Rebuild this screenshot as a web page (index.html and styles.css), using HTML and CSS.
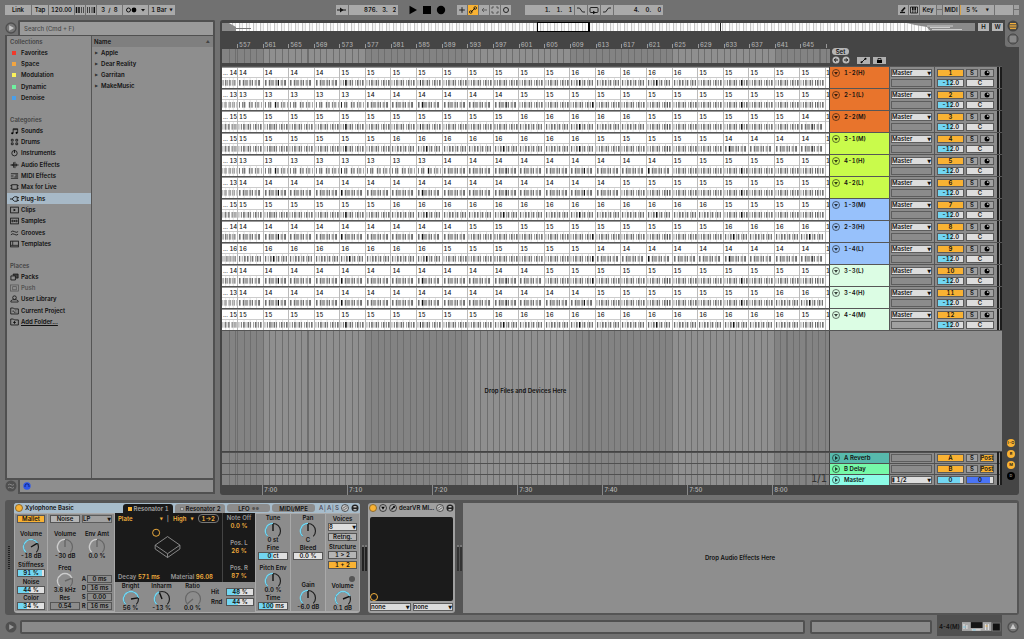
FILE: index.html
```html
<!DOCTYPE html>
<html lang="en">
<head>
<meta charset="utf-8">
<title>Arrangement</title>
<link rel="stylesheet" href="styles.css">
</head>
<body>
<header class="topbar">
  <div class="group">
    <button class="tb w25">Link</button><button class="tb w15">Tap</button><input class="tb w24" aria-label="Tempo" value="120.00">
    <button class="tb w10" aria-label="Nudge down"><svg viewBox="0 0 10 10"><path d="M1.5 2v6M4 2v6" stroke="#111" stroke-width="1.5"/><path d="M6.5 2v6M8.5 2v6" stroke="#333" stroke-width=".8"/></svg></button>
    <button class="tb w10" aria-label="Nudge up"><svg viewBox="0 0 10 10"><path d="M1.5 2v6M3.5 2v6M6 2v6" stroke="#333" stroke-width=".9"/><path d="M8.3 2v6" stroke="#111" stroke-width="1.5"/></svg></button>
    <input class="tb w24" aria-label="Time signature" value="3  /  8">
    <button class="tb w24" aria-label="Metronome"><svg class="wide" viewBox="0 0 24 10"><circle cx="5" cy="5" r="2" fill="none" stroke="#111"/><circle cx="10.500" cy="5" r="2.400" fill="#000"/><path d="M17.500 4h4l-2 2.500z" fill="#111"/></svg></button>
    <button class="tb w26">1 Bar <span class="tri">▼</span></button>
  </div>
  <div class="space-a"></div>
  <div class="group">
    <button class="tb w12" aria-label="Follow"><svg viewBox="0 0 12 10"><path d="M1 5h9" stroke="#111"/><path d="M4 2.500L7.500 5 4 7.500z" fill="#111"/></svg></button><input class="tb w49 pos" aria-label="Position" value="876.   3.   2">
    <div class="transport">
      <button aria-label="Play"><svg viewBox="0 0 10 10"><path d="M1.500 .8L9 5 1.500 9.200z"/></svg></button>
      <button aria-label="Stop"><svg viewBox="0 0 10 10"><path d="M1 1h8v8H1z"/></svg></button>
      <button aria-label="Record"><svg viewBox="0 0 10 10"><circle cx="5" cy="5" r="4.200"/></svg></button>
    </div>
    <button class="tb w10" aria-label="Overdub"><svg viewBox="0 0 10 10"><path d="M5 2.200v5.600M2.200 5h5.600" stroke="#222"/></svg></button>
    <button class="tb w10 on" aria-label="Automation arm"><svg viewBox="0 0 10 10"><path d="M3 7L7 3.200" stroke="#111"/><circle cx="2.800" cy="7" r="1.300" fill="none" stroke="#111" stroke-width=".8"/><circle cx="7.200" cy="3" r="1.300" fill="none" stroke="#111" stroke-width=".8"/></svg></button>
    <button class="tb w10" aria-label="Re-enable automation"><svg viewBox="0 0 10 10"><path d="M3 5h5M5 3L3 5l2 2" fill="none" stroke="#555" stroke-width=".9"/></svg></button>
    <button class="tb w10" aria-label="Capture"><svg viewBox="0 0 10 10"><path d="M2 4V2h2M6 2h2v2M8 6v2H6M4 8H2V6" fill="none" stroke="#444" stroke-width=".8"/></svg></button>
    <button class="tb w10" aria-label="Session record"><svg viewBox="0 0 10 10"><circle cx="5" cy="5" r="2.500" fill="none" stroke="#222"/></svg></button>
    <div class="space-s"></div>
    <input class="tb w49 pos" aria-label="Loop start" value="1.    1.    1">
    <button class="tb w12" aria-label="Punch in"><svg viewBox="0 0 12 10"><path d="M2 3h2.500l3 4H10" fill="none" stroke="#222"/></svg></button>
    <button class="tb w12" aria-label="Loop"><svg viewBox="0 0 12 10"><rect x="2" y="2.500" width="8" height="5" rx="1" fill="none" stroke="#222"/><path d="M5 5.800v3.400L8 7.500z" fill="#111"/></svg></button>
    <button class="tb w12" aria-label="Punch out"><svg viewBox="0 0 12 10"><path d="M2 7h2.500l3-4H10" fill="none" stroke="#222"/></svg></button>
    <input class="tb w49 pos" aria-label="Loop length" value="4.    0.    0">
  </div>
  <div class="space-b"></div>
  <div class="group">
    <button class="tb w10" aria-label="Draw mode"><svg viewBox="0 0 10 10"><path d="M3.500 6.500l3.500-4" stroke="#111" stroke-width="1.800"/><path d="M2 7.500h5" stroke="#111" stroke-width="1.300"/></svg></button>
    <button class="tb w10" aria-label="Computer keyboard"><svg viewBox="0 0 10 10"><path d="M1.500 2v6h7V2zM3.800 6v2M6.200 6v2" fill="none" stroke="#111" stroke-width=".8"/><path d="M3.800 2v3.500M6.200 2v3.500" stroke="#111" stroke-width="1.600"/></svg></button>
    <button class="tb w15">Key</button><span class="led"></span>
    <button class="tb w15">MIDI</button><button class="tb w34 cpu">5 % <span class="tri">▼</span></button>
    <span class="tb w18"></span><span class="led"></span>
  </div>
</header>

<main class="main">
  <section class="browser">
    <div class="search-row">
      <button class="round" aria-label="Hide browser"><svg viewBox="0 0 12 12"><circle cx="6" cy="6" r="5" fill="#777" stroke="#4f4f4f" stroke-width="1.300"/><path d="M4.200 3.200L9 6 4.200 8.800z" fill="#c9c9c9"/></svg></button>
      <input class="search" type="search" aria-label="Search" placeholder="Search (Cmd + F)">
    </div>
    <div class="panes">
      <nav class="side">
        <h2>Collections</h2>
        <ul>
          <li><i class="sw" style="background:#f0392b"></i>Favorites</li>
          <li><i class="sw" style="background:#f2a541"></i>Space</li>
          <li><i class="sw" style="background:#fbf25b"></i>Modulation</li>
          <li><i class="sw" style="background:#6ff2a0"></i>Dynamic</li>
          <li><i class="sw" style="background:#4a9fea"></i>Denoise</li>
        </ul>
        <h2>Categories</h2>
        <ul class="cats">
          <li><svg viewBox="0 0 10 8"><path d="M3.500 6.500V1.500h5v4.500M3.500 2.500h5" fill="none" stroke="#111" stroke-width=".9"/><circle cx="2.500" cy="6.500" r="1.200"/><circle cx="7.400" cy="6" r="1.200"/></svg>Sounds</li>
          <li><svg viewBox="0 0 10 8"><path d="M1.500 1h2v2h-2zM6.500 1h2v2h-2zM1.500 5h2v2h-2zM6.500 5h2v2h-2z" fill="none" stroke="#111" stroke-width=".9"/></svg>Drums</li>
          <li><svg viewBox="0 0 10 8"><circle cx="5" cy="4.200" r="3" fill="none" stroke="#111" stroke-width=".9"/><path d="M5 .5v3.500" stroke="#111"/></svg>Instruments</li>
          <li><svg viewBox="0 0 10 8"><path d="M.5 4h9M2.500 3v2M4 1v6M5.500 .5v7M7 2.500v3" stroke="#111" stroke-width=".9"/></svg>Audio Effects</li>
          <li><svg viewBox="0 0 10 8"><path d="M1 1.500h8M1 6.500h8M1 4h3M6 3h3M5 5h4" stroke="#111" stroke-width=".9"/></svg>MIDI Effects</li>
          <li><svg viewBox="0 0 10 8"><rect x="2" y="1.500" width="6" height="5" fill="none" stroke="#111" stroke-width=".9"/><path d="M.5 2.500H2M.5 5.500H2M8 2.500h1.500M8 5.500h1.500" stroke="#111"/></svg>Max for Live</li>
          <li class="sel"><svg viewBox="0 0 10 8"><path d="M0 4h3M8 2.500h2M8 5.500h2" stroke="#111"/><path d="M8 1.500H5L3 3v2l2 1.500h3z" fill="none" stroke="#111" stroke-width=".9"/></svg>Plug-Ins</li>
          <li><svg viewBox="0 0 10 8"><rect x=".7" y=".8" width="8.600" height="6.400" fill="none" stroke="#111" stroke-width=".9"/><path d="M4 2.500L6.500 4 4 5.500z"/></svg>Clips</li>
          <li><svg viewBox="0 0 10 8"><rect x=".7" y=".8" width="8.600" height="6.400" fill="none" stroke="#111" stroke-width=".9"/><path d="M1 4h8M3 2.500v3M5 3v2M7 2.500v3" stroke="#111" stroke-width=".8"/></svg>Samples</li>
          <li><svg viewBox="0 0 10 8"><path d="M1 3q2-2 4-.5T9 2.500M1 6q2-2 4-.5T9 5.500" fill="none" stroke="#111" stroke-width=".9"/></svg>Grooves</li>
          <li><svg viewBox="0 0 10 8"><rect x=".7" y=".8" width="8.600" height="6.400" fill="none" stroke="#111" stroke-width=".9"/><path d="M3 1v4.500M1 5.500h8" stroke="#111" stroke-width=".8"/></svg>Templates</li>
        </ul>
        <h2>Places</h2>
        <ul>
          <li><svg viewBox="0 0 10 8"><path d="M3.500 2V.7h5.500v4.500H6.500" fill="#444" stroke="#111" stroke-width=".8"/><path d="M1 2.800h5v4.500H1z" fill="#8e8e8e" stroke="#111" stroke-width=".9"/></svg>Packs</li>
          <li class="dim"><svg viewBox="0 0 10 8"><rect x=".7" y=".6" width="8.600" height="6.800" fill="none" stroke="#555" stroke-width=".8"/><rect x="3" y="2.500" width="4" height="3.500" fill="none" stroke="#555" stroke-width=".8"/></svg>Push</li>
          <li><svg viewBox="0 0 10 8"><circle cx="5" cy="2.500" r="2" fill="none" stroke="#111" stroke-width=".9"/><path d="M1 7.400V6l2-1.200h4L9 6v1.400z" fill="none" stroke="#111" stroke-width=".8"/></svg>User Library</li>
          <li><svg viewBox="0 0 10 8"><path d="M.8 7.300V.7h3l1 1h4.500v5.600z" fill="none" stroke="#111" stroke-width=".9"/><path d="M3.500 3.500v1.500M5 4.800v1M6.500 3.500v.8M6.500 5.500v.6" stroke="#111"/></svg>Current Project</li>
          <li><svg viewBox="0 0 10 8"><path d="M.8 7.300V.7h3l1 1h4.500v5.600z" fill="none" stroke="#111" stroke-width=".9"/><path d="M5 3v3M3.500 4.500h3" stroke="#111"/></svg><a href="#add">Add Folder...</a></li>
        </ul>
      </nav>
      <div class="files">
        <div class="name-head">Name<span>▲</span></div>
        <ul><li><span>▶</span>Apple</li><li><span>▶</span>Dear Reality</li><li><span>▶</span>Garritan</li><li><span>▶</span>MakeMusic</li></ul>
      </div>
    </div>
    <div class="preview-row">
      <button class="round" aria-label="Groove pool"><svg viewBox="0 0 12 12"><circle cx="6" cy="6" r="5.500" fill="#4f4f4f"/><path d="M3 5q1.500-1.500 3-.3T9 4.500M3 8q1.500-1.500 3-.3T9 7.500" fill="none" stroke="#888" stroke-width="1"/></svg></button>
      <div class="preview"><svg viewBox="0 0 8 8"><circle cx="4" cy="4" r="3.700" fill="#2f58ea"/><path d="M2 5V3.800a2 2 0 0 1 4 0V5" fill="none" stroke="#0a1a66" stroke-width=".8"/></svg></div>
    </div>
  </section>

  <section class="arr">
    <div class="arr-main">
      <div class="ov-row">
        <div class="overview"><svg preserveAspectRatio="none" viewBox="0 0 753 8"><path d="M0 0h7l7 4v4H0z" fill="#8a8a8a"/><path d="M14 5.500h15" stroke="#777"/><path d="M685 0h68v8h-45l-3-4-12-2z" fill="#8a8a8a"/><path d="M705 3h26M708 4.500h20M710 6.500h30" stroke="#ddd" stroke-width=".8"/><path d="M498.500 0v8" stroke="#222"/></svg><span class="view"></span></div>
        <button class="mini">H</button><button class="mini">W</button>
      </div>
      <div class="ruler-row">
        <div class="rulers"><div class="cols ruler" id="ruler"></div><div class="cols bars scrub" data-bars></div></div>
        <div class="locators">
          <button class="set">Set</button>
          <div class="loc-row">
            <button class="dot" aria-label="Previous locator"><svg viewBox="0 0 8 8"><circle cx="4" cy="4" r="3.500" fill="#bbb"/><path d="M6 4H2.500M4 2.300L2.300 4 4 5.700" stroke="#111" fill="none"/></svg></button>
            <button class="dot" aria-label="Next locator"><svg viewBox="0 0 8 8"><circle cx="4" cy="4" r="3.500" fill="#bbb"/><path d="M2 4h3.500M4 2.300L5.700 4 4 5.700" stroke="#111" fill="none"/></svg></button>
            <button class="lbtn first" aria-label="Automation mode"><svg viewBox="0 0 13 7"><path d="M4.500 5.500l4-4" stroke="#111"/><circle cx="4.500" cy="5.300" r="1"/><circle cx="8.500" cy="1.700" r="1"/></svg></button>
            <button class="lbtn" aria-label="Lock envelopes"><svg viewBox="0 0 13 7"><path d="M4 3h5v3H4z"/><path d="M5 3V1.500h3V3" fill="none" stroke="#111" stroke-width=".8"/></svg></button>
          </div>
        </div>
      </div>
      <div class="tracks" id="tracks"></div>
      <div class="drop-row"><div class="cols bars drop" data-bars></div><p>Drop Files and Devices Here</p><div class="drop-side"></div></div>
      <div class="returns" id="returns"></div>
      <div class="time-ruler"><span>7:00</span><span>7:10</span><span>7:20</span><span>7:30</span><span>7:40</span><span>7:50</span><span>8:00</span></div>
    </div>
    <aside class="strip">
      <div class="notch">
        <button class="round" aria-label="Arrangement view"><svg viewBox="0 0 12 12"><circle cx="6" cy="6" r="5.500" fill="#444"/><path d="M3 3.500h6M2.500 5.200h7M2.500 6.900h7M3 8.600h6" stroke="#f6b13c" stroke-width="1"/></svg></button>
        <button class="round" aria-label="Session view"><svg viewBox="0 0 12 12"><circle cx="6" cy="6" r="5" fill="#6b6b6b" stroke="#444"/><path d="M4 3v6M6 3v6M8 3v6" stroke="#aaa" stroke-width=".9"/></svg></button>
      </div>
      <div class="toggles"><button>I-O</button><button>R</button><button>M</button><button class="off">D</button></div>
    </aside>
  </section>
</main>

<section class="detail">
  <div class="grip"></div>
  <article class="device synth">
    <div class="dev-title">
      <span class="power"></span><b>Xylophone Basic</b>
      <div class="tabs"><button class="active"><i></i>Resonator 1</button><button><i></i>Resonator 2</button><button>LFO <small>●●</small></button><button class="last">MIDI/MPE</button></div>
      <span class="aas">A│A│S</span>
      <svg class="ic" viewBox="0 0 8 8"><circle cx="4" cy="4" r="3.500" fill="#ccc" stroke="#222" stroke-width=".7"/><path d="M2 4.500L4 2.500M4 5.500l2-2M2.500 5.800h1M4.500 2.200h1" stroke="#222" stroke-width=".8"/></svg>
      <svg class="ic" viewBox="0 0 8 8"><circle cx="4" cy="4" r="3.500" fill="#222"/><path d="M2.500 2h3v1.500h-3zM2.500 5h3v1.500h-3z" fill="#bbb"/></svg>
    </div>
    <div class="dev-body">
      <div class="col c-mallet">
        <button class="btn on">Mallet</button>
        <div class="kn g7" data-k="Volume|-18 dB|.72|0"></div>
        <label class="fld g1">Stiffness<input class="num fill" style="--v:91%" value="91 %"></label>
        <label class="fld g1">Noise<input class="num fill" style="--v:44%" value="44 %"></label>
        <label class="fld">Color<input class="num fill" style="--v:34%" value="34 %"></label>
      </div>
      <div class="col c-noise">
        <div class="pair"><button class="btn">Noise</button><span class="sel-wrap"><select class="grey" aria-label="Noise filter"><option>LP</option></select></span></div>
        <div class="pair g7"><div class="kn" data-k="Volume|-30 dB|.5|2"></div><div class="kn" data-k="Env Amt|0.0 %|.5|2"></div></div>
        <div class="pair g4">
          <div><div class="kn" data-k="Freq|3.6 kHz|.75|2"></div><label class="fld">Res<input class="num box" value="0.54"></label></div>
          <div class="adsr"><label>A<input class="num box" value="0 ms"></label><label>D<input class="num box" value="16 ms"></label><label>S<input class="num box" value="0.00"></label><label>R<input class="num box" value="16 ms"></label></div>
        </div>
      </div>
      <div class="res">
        <div class="screen">
          <div class="scr-main">
            <div class="scr-top"><span>Plate</span><span class="tri">▼</span><em>|</em><span>High</span><span class="tri">▼</span><span class="pill">1→2</span></div>
            <svg class="plate" viewBox="0 0 106 48"><circle cx="40" cy="8" r="3.700" fill="none" stroke="#f3b03e" stroke-width="1"/><path d="M39 21L52 12l13 9-13 9zM39 21v4l13 9 13-9v-4M52 30v4" fill="none" stroke="#999" stroke-width=".9"/></svg>
            <div class="scr-bot"><span><em>Decay</em> 571 ms</span><span><em>Material</em> 96.08</span></div>
          </div>
          <dl class="scr-side"><dt>Note Off</dt><dd>0.0 %</dd><dt>Pos. L</dt><dd>26 %</dd><dt>Pos. R</dt><dd>87 %</dd></dl>
        </div>
        <div class="res-low">
          <div class="kn" data-k="Bright|56 %|.8|0"></div><div class="kn" data-k="Inharm|-13 %|.42|1"></div><div class="kn" data-k="Ratio|0.0 %|0.02|3"></div>
          <div class="hits"><label>Hit<input class="num fill" style="--v:48%" value="48 %"></label><label>Rnd<input class="num fill" style="--v:44%" value="44 %"></label></div>
        </div>
      </div>
      <div class="col c-tune">
        <div class="kn" data-k="Tune|0 st|.5|1"></div>
        <label class="fld">Fine<input class="num fill" style="--v:50%" value="0 ct"></label>
        <div class="kn g4" data-k="Pitch Env|0.0 %|.5|1"></div>
        <label class="fld">Time<input class="num fill" style="--v:50%" value="100 ms"></label>
      </div>
      <div class="col c-pan">
        <div class="kn" data-k="Pan|C|.5|1"></div>
        <label class="fld">Bleed<input class="num fill" style="--v:0%" value="0.0 %"></label>
        <div class="kn end" data-k="Gain|-6.0 dB|.5|0"></div>
      </div>
      <div class="col c-voice">
        <label class="fld">Voices<span class="sel-wrap"><select><option>8</option></select></span></label>
        <button class="btn g2">Retrig.</button>
        <span class="cap g2">Structure</span>
        <button class="btn">1 &gt; 2</button><button class="btn on g2">1 + 2</button>
        <i class="lamp"></i>
        <div class="kn end" data-k="Volume|0.1 dB|.75|0"></div>
      </div>
    </div>
  </article>
  <div class="vmeter"><i></i><i></i></div>
  <article class="device vr">
    <div class="dev-title plain"><span class="power"></span>
      <svg class="ic" viewBox="0 0 8 8"><circle cx="4" cy="4" r="3.500" fill="#aaa" stroke="#222" stroke-width=".8"/><path d="M2.200 2.800h3.600L4 5.800z"/></svg>
      <svg class="ic" viewBox="0 0 8 8"><circle cx="4" cy="4" r="3.500" fill="#aaa" stroke="#222" stroke-width=".8"/><path d="M2.500 5.500L4.500 3.500" stroke="#111" stroke-width="1.200"/><circle cx="5" cy="3" r="1.100"/></svg>
      <b>dearVR MI...</b>
      <svg class="ic" viewBox="0 0 8 8"><circle cx="4" cy="4" r="3.500" fill="#ccc" stroke="#222" stroke-width=".7"/><path d="M2 4.500L4 2.500M4 5.500l2-2M2.500 5.800h1M4.500 2.200h1" stroke="#222" stroke-width=".8"/></svg>
      <svg class="ic" viewBox="0 0 8 8"><circle cx="4" cy="4" r="3.500" fill="#222"/><path d="M2.500 2h3v1.500h-3zM2.500 5h3v1.500h-3z" fill="#bbb"/></svg>
    </div>
    <div class="xy"><span></span></div>
    <div class="pair vr-sel"><span class="sel-wrap"><select aria-label="X parameter"><option>none</option></select></span><span class="sel-wrap"><select aria-label="Y parameter"><option>none</option></select></span></div>
  </article>
  <div class="vmeter low"><i></i><i></i></div>
  <div class="fx-drop">Drop Audio Effects Here</div>
</section>

<footer class="status">
  <button class="round" aria-label="Info view"><svg viewBox="0 0 12 12"><circle cx="6" cy="6" r="5.500" fill="#4f4f4f"/><path d="M4.200 3.200L9 6 4.200 8.800z" fill="#999"/></svg></button>
  <div class="info"></div><div class="info short"></div>
  <div class="chain"><b>4-4(M)</b><svg viewBox="0 0 40 10"><rect width="30" height="9" fill="#a8a8a8"/><rect x="9" y="0" width="12" height="6" fill="#151515"/><path d="M2 2v5M5 3v4M24 2v6M27 2v6M10 8h9" stroke="#ddd" stroke-width="1.200"/><path d="M1 5h3M11 8h3" stroke="#7bc5dd"/><path d="M24 4h2" stroke="#f3b03e"/><rect x="31" y="1" width="8" height="8" fill="#111" stroke="#777" stroke-width=".8"/></svg></div>
  <button class="round" aria-label="Detail view"><svg viewBox="0 0 12 12"><circle cx="6" cy="6" r="5" fill="#777" stroke="#4f4f4f" stroke-width="1.300"/><path d="M6 2.800L8.800 8H3.200z" fill="#c9c9c9"/></svg></button>
</footer>
<script src="app.js"></script>
</body>
</html>
```
FILE: styles.css
```css
* { box-sizing: border-box; margin: 0; padding: 0; }
html { font: 600 6px/8px Inter, Roboto, "Liberation Sans", sans-serif; font-variant-numeric: tabular-nums; color: #111; }
body { background: #717171; display: flex; flex-direction: column; min-height: 100vh; }
button, input, select { font: inherit; font-variant-numeric: inherit; color: inherit; border: 0; border-radius: 0; background: none; min-width: 0; }
input { outline: 0; }
svg { display: block; }
ul { list-style: none; }
h2 { font: inherit; }
.round { width: 12px; height: 12px; flex: none; }
.round svg { width: 12px; height: 12px; }
.tri { font-family: "DejaVu Sans", sans-serif; font-size: 4px; }

.topbar { height: 20px; padding: 5px 5px 0; display: flex; flex: none; }
.group { display: flex; gap: 1px; align-items: flex-start; }
.space-a { flex: 161; } .space-b { flex: 234; } .space-s { width: 12px; }
.tb { height: 10px; line-height: 10px; background: #a9a9a9; text-align: center; display: flex; align-items: center; justify-content: center; gap: 3px; white-space: nowrap; }
.tb svg { height: 10px; width: 100%; }
.tb.on { background: #f9b233; }
.pos { text-align: right; padding-right: 2px; white-space: pre; }
.w10 { width: 10px; } .w12 { width: 12px; } .w15 { width: 16px; } .w18 { width: 18px; } .w24 { width: 25px; }
.w25 { width: 26px; } .w26 { width: 26px; } .w34 { width: 34px; } .w49 { width: 49px; }
.transport { display: flex; gap: 4px; padding: 0 10px 0 9px; }
.transport button, .transport svg { width: 10px; height: 10px; }
.cpu { border-left: 1px solid #d9a34a; gap: 8px; }
.led { width: 5px; height: 10px; background: linear-gradient(#a0a0a0 0 4px, #717171 4px 5px, #a0a0a0 5px); }

.main { flex: 1; display: flex; gap: 5px; padding: 0 5px; }
.browser { width: 210px; display: flex; flex-direction: column; flex: none; font-variant-numeric: normal; }
.search-row, .preview-row { display: flex; align-items: center; }
.search { flex: 1; height: 15px; margin-left: 1px; border: 2px solid #505050; border-bottom: 0; background: #9a9a9a; padding-left: 4px; border-radius: 2px 2px 0 0; font-weight: 500; }
.search::placeholder { color: #4a4a4a; opacity: 1; }
.panes { flex: 1; display: flex; border: 2px solid #505050; border-top-width: 1px; background: #8e8e8e; }
.side { width: 85px; border-right: 1px solid #555; }
.side h2 { height: 11px; line-height: 11px; padding-left: 3px; color: #444; }
.side ul + h2 { margin-top: 11px; }
.side li { height: 11px; line-height: 11px; display: flex; align-items: center; padding-left: 3px; gap: 2px; }
.side li:nth-child(3n) { margin-bottom: 1px; }
.side li svg { width: 9px; height: 8px; }
.side li a { color: inherit; }
.side .sw { width: 4px; height: 4px; margin: 0 3px 0 2px; }
.side .sel { background: #a7b9c7; }
.side .dim { color: #555; }
.files { flex: 1; }
.name-head { background: #7f7f7f; height: 11px; line-height: 11px; padding: 0 3px 0 2px; display: flex; justify-content: space-between; }
.name-head span { font-size: 4px; color: #444; }
.files li { height: 11px; line-height: 11px; padding-left: 3px; display: flex; gap: 3px; }
.files li span { font: 4px/11px "DejaVu Sans", sans-serif; color: #333; }
.preview { flex: 1; height: 14px; margin-left: 1px; border: 2px solid #505050; border-top: 0; background: #8e8e8e; padding: 2px 3px; }
.preview svg { width: 8px; height: 8px; }
.browser .preview-row { align-items: flex-start; padding-bottom: 1px; }

.arr { flex: 1; display: flex; background: #454545; border-radius: 3px; padding-left: 2px; min-width: 0; }
.arr-main { flex: 1; padding: 3px 3px 0 0; display: flex; flex-direction: column; min-width: 0; }
.ov-row { display: flex; gap: 2px; margin-right: -1px; }
.overview { flex: 1; height: 8px; position: relative; background: repeating-linear-gradient(90deg, #fff 0 3px, #c4c4c4 3px 4px, #f4f4f4 4px 6px, #dadada 6px 7px); }
.overview svg { width: 100%; height: 8px; }
.view { position: absolute; left: 41.8%; width: 7.100%; top: -1px; height: 10px; border: 1px solid #000; border-right-width: 2px; }
.mini { width: 11px; height: 8px; background: #b5b5b5; margin-left: 1px; }
.ruler-row { display: flex; height: 33px; }
.rulers { flex: 1; min-width: 0; }
.cols { display: grid; grid-template-columns: 15px repeat(23, minmax(0, 1fr)) 4px; overflow: hidden; }
.ruler { height: 18px; align-items: end; padding-bottom: 1px; color: #b0b0b0; }
.ruler span { border-left: 1px solid #999; height: 4px; padding-left: 1px; line-height: 2px; white-space: nowrap; font-weight: 500; }
.bars i { background: repeating-linear-gradient(90deg, #6e6e6e 0 1px, transparent 1px 25%) #838383; }
.bars i.lt { background-color: #8f8f8f; }
.bars i:first-child { background-image: repeating-linear-gradient(90deg, transparent 0 7px, #6e6e6e 7px 8px, transparent 8px 13px, #6e6e6e 13px 14px); }
.bars i:last-child { background-image: linear-gradient(90deg, #6e6e6e 1px, transparent 1px); }
.scrub { height: 14px; }
.locators { width: 172px; padding: 17px 0 0 2px; }
.set { width: 17px; height: 7px; line-height: 7px; border-radius: 4px; background: #b5b5b5; display: block; }
.loc-row { display: flex; gap: 2px; margin-top: 1px; align-items: center; }
.dot, .dot svg { width: 8px; height: 8px; }
.lbtn { width: 13px; height: 7px; background: #b0b0b0; margin-right: 1px; }
.lbtn.first { margin-left: 5px; }
.lbtn svg { width: 13px; height: 7px; }

.tracks { margin-top: 2px; }
.track { display: flex; height: 22px; border-top: 1px solid #565656; }
.lane { flex: 1; min-width: 0; background: #fff; border-top: 1px solid #999; }
.clip { border-left: 1px solid #bbb; overflow: hidden; white-space: nowrap; }
.clip:first-child { border: 0; }
.clip b { display: block; font-weight: 500; height: 10px; line-height: 10px; padding-left: 1px; border-bottom: 1px solid #ccc; }
.clip:last-child b { padding: 0; }
.clip svg { width: 100%; height: 10px; }
.head { width: 59px; margin-left: 1px; display: flex; gap: 4px; padding-left: 2px; line-height: 11px; }
.head svg { width: 8px; height: 8px; flex: none; margin-top: 2px; opacity: .75; }
.io { width: 45px; background: #8b8b8b; border-left: 1px solid #555; padding: 2px 2px 1px 1px; display: flex; flex-direction: column; gap: 2px; }
.io .empty { flex: 1; border: 1px solid #5d5d5d; }
.mix { width: 68px; background: #8b8b8b; border-left: 1px solid #555; padding: 2px 1px 0 2px; display: grid; grid-template-columns: 27px 12px 14px 6px; gap: 2px; grid-template-rows: 8px 8px; line-height: 8px; text-align: center; }
.mix button, .mix input { box-shadow: inset 0 0 0 1px #5a5a5a; background: #a2a2a2; line-height: 8px; height: 8px; text-align: center; width: 100%; }
.mix .act { background: #f9b233; }
.mix .vol { background: linear-gradient(90deg, #72d6f2 var(--v), #ddd var(--v)); }
.mix .pan { grid-column: span 2; background: #ddd; }
.mix .cue { background: linear-gradient(90deg, #4a74f5 85%, #ddd 85%); }
.mix svg { width: 6px; height: 6px; margin: auto; }
.mix .lvl { grid-row: 1 / span 2; grid-column: 4; border: solid #1c1c1c; border-width: 0 2px; width: 5px; margin: -2px 0 -1px 1px; }
.track.cur .io, .track.cur .mix { background: #a0a0a0; }
.sel-wrap { position: relative; display: block; height: 8px; }
.sel-wrap select { appearance: none; width: 100%; height: 8px; line-height: 8px; box-shadow: inset 0 0 0 1px #5d5d5d; background: #ddd; padding-left: 1px; display: block; }
.sel-wrap select.grey { background: #a0a0a0; }
.sel-wrap::after { content: "▼"; position: absolute; right: 1px; top: 0; font: 5px/8px "DejaVu Sans", sans-serif; pointer-events: none; }

.drop-row { flex: 1; display: flex; position: relative; border-top: 1px solid #555; }
.drop-row .cols { flex: 1; }
.drop-row p { position: absolute; left: 0; right: 173px; top: 50%; margin-top: -4px; text-align: center; }
.drop-side { width: 172px; margin-left: 1px; background: #8e8e8e; }
.returns { border-top: 1px solid #444; position: relative; }
.ret { display: flex; height: 11px; border-top: 1px solid #505050; }
.ret .cols { flex: 1; }
.ret .mix { grid-template-rows: 8px; padding-top: 1px; }
.ret .mix .lvl { grid-row: 1; }
.ret .io { padding-top: 1px; }
.ret .head { line-height: 10px; }
.ret .head svg { margin-top: 1px; }
.ratio { position: absolute; right: 175px; bottom: 1px; font: 10px/11px "DejaVu Sans", sans-serif; color: #333; }
.time-ruler { height: 10px; margin: 0 173px 0 40px; color: #bbb; display: flex; line-height: 10px; font-weight: 500; }
.time-ruler span { flex: 85; border-left: 1px solid #888; padding-left: 1px; }
.time-ruler span:last-child { flex: 56; }
.strip { width: 14px; display: flex; flex-direction: column; justify-content: space-between; }
.notch { background: #717171; height: 27px; border-radius: 0 0 0 3px; padding-left: 2px; }
.notch .round { display: block; margin-bottom: 1px; }
.toggles { display: flex; flex-direction: column; gap: 3px; padding: 0 0 15px 2px; }
.toggles button { width: 8px; height: 8px; border-radius: 4px; background: #f9b233; font-size: 4px; line-height: 8px; }
.toggles .off { background: #000; color: #888; }

.detail { margin: 5px 5px 0; background: #555; border-radius: 3px; padding: 3px 2px 2px; display: flex; }
.grip { width: 7px; display: flex; }
.grip::after { content: ""; width: 2px; height: 24px; margin: auto auto auto 1px; background: repeating-linear-gradient(#222 0 1px, #555 1px 2px); }
.device { background: #a9a9a9; border-radius: 3px; flex: none; overflow: hidden; }
.synth { width: 346px; }
.dev-title { background: #a7bccb; height: 10px; line-height: 10px; display: flex; align-items: center; padding: 0 1px; gap: 2px; }
.dev-title b { font-weight: 600; flex: 1; white-space: nowrap; }
.power { width: 8px; height: 8px; border-radius: 4px; border: 1px solid #8a6a30; background: #f9b233; }
.tabs { display: flex; gap: 2px; flex: none; }
.tabs button { height: 9px; margin-top: 1px; border-radius: 3px 3px 0 0; background: #8c8c8c; width: 50px; line-height: 9px; display: flex; align-items: center; justify-content: center; gap: 2px; white-space: nowrap; }
.tabs button:nth-child(n+3) { width: 43px; border-radius: 3px; height: 8px; }
.tabs i { width: 4px; height: 4px; background: #bbb; border: 1px solid #777; }
.tabs small { font-size: 4px; color: #555; }
.tabs .active { background: #1a1a1a; color: #a5a5a5; }
.tabs .active i { background: #f9b233; border: 0; }
.aas { padding-left: 2px; color: #445; font-weight: 500; }
.ic { width: 8px; height: 8px; flex: none; }
.dev-body { display: flex; padding: 0 1px 2px; gap: 1px; height: 100px; }
.col { background: #8c8c8c; padding: 1px 2px 0; display: flex; flex-direction: column; text-align: center; margin-top: 1px; }
.c-mallet { width: 32px; } .c-noise { width: 66px; } .c-tune, .c-pan { width: 34px; } .c-voice { flex: 1; background: #959595; }
.c-tune, .c-pan { padding-top: 0; }
.g1 { margin-top: 1px; } .g2 { margin-top: 2px; } .g4 { margin-top: 4px; } .g7 { margin-top: 7px; }
.end { margin-top: auto; }
.btn { height: 8px; line-height: 8px; box-shadow: inset 0 0 0 1px #555; background: #b5b5b5; display: block; width: 100%; flex: none; }
.btn.on { background: #f9b233; }
.kn { display: flex; flex-direction: column; align-items: center; white-space: nowrap; flex: none; }
.kn span { height: 8px; }
.kn svg { width: 18px; height: 16px; margin-bottom: -2px; }
.fld { display: block; text-align: center; line-height: 8px; flex: none; }
.fld .num { width: 100%; }
.num { height: 8px; line-height: 8px; box-shadow: inset 0 0 0 1px #555; text-align: center; display: block; }
.num.fill { background: linear-gradient(90deg, #72d6f2 var(--v), #e0e0e0 var(--v)); }
.pair { display: grid; grid-template-columns: 1fr 1fr; gap: 2px; }
.adsr { display: flex; flex-direction: column; gap: 1px; justify-content: flex-end; }
.adsr label, .hits label { display: flex; justify-content: space-between; gap: 1px; }
.adsr .num { width: 25px; }
.res { width: 140px; display: flex; flex-direction: column; }
.screen { background: #1a1a1a; color: #f3b03e; display: flex; height: 69px; }
.screen em { font-style: normal; color: #999; }
.scr-main { flex: 1; padding: 1px 3px; display: flex; flex-direction: column; }
.scr-top { display: flex; gap: 4px; align-items: center; }
.scr-top span:first-child { flex: 1; }
.pill { border: 1px solid #777; border-radius: 4px; padding: 0 3px; line-height: 7px; }
.plate { flex: 1; min-height: 0; width: 100%; }
.scr-bot { display: flex; justify-content: space-between; padding-right: 6px; white-space: nowrap; }
.scr-side { width: 33px; border-left: 1px solid #444; text-align: center; padding-top: 1px; display: flex; flex-direction: column; }
.scr-side dt { color: #999; white-space: nowrap; } .scr-side dd { margin-bottom: 9px; }
.res-low { background: #8c8c8c; flex: 1; display: grid; grid-template-columns: 31px 31px 31px 1fr; gap: 0; }
.hits { display: flex; flex-direction: column; gap: 2px; padding: 6px 1px 0 3px; }
.hits .num { width: 28px; }
.cap { height: 8px; }
.lamp { width: 6px; height: 6px; border-radius: 3px; background: #555; margin: 7px 2px 0 auto; flex: none; }
.vmeter { width: 8px; display: flex; gap: 1px; justify-content: center; align-items: center; }
.vmeter i { width: 2px; height: 26px; background: #222; border-top: 2px solid #777; }
.vmeter.low i { background: #333; }
.vr { width: 87px; background: #a0a0a0; display: flex; flex-direction: column; }
.dev-title.plain { background: none; }
.xy { background: #1b1b1b; margin: 4px 2px 2px; flex: 1; display: flex; align-items: flex-end; border-radius: 2px; }
.xy span { width: 8px; height: 8px; border: 1px solid #f3b03e; border-radius: 4px; }
.vr-sel { padding: 0 2px 2px; }
.fx-drop { flex: 1; background: #8e8e8e; display: flex; align-items: center; justify-content: center; }
.status { flex: none; height: 24px; padding: 0 5px 0; display: flex; align-items: center; gap: 5px; }
.info { flex: 1; height: 14px; border: 2px solid #505050; background: #8a8a8a; border-radius: 2px; }
.status .round:first-child { margin-right: -2px; }
.short { flex: 0 0 122px; }
.chain { width: 65px; align-self: stretch; margin-bottom: 3px; padding: 3px 1px 0 2px; background: #505050; display: flex; align-items: center; gap: 2px; white-space: nowrap; font-variant-numeric: normal; }
.chain b { font-weight: 600; flex: none; }
.chain svg { flex: 1; min-width: 0; height: 10px; }
```
FILE: app.js
```js
const rep = spec => spec.split(' ').flatMap(p => { const [n, c] = p.split('x'); return Array(+(c || 1)).fill(+n); });
const tracks = [
  ['1-2(H)', '#e8742c', 14, '14x4 15x9 16x5 15x5'],
  ['2-1(L)', '#e8742c', 13, '13x5 14x6 15x12'],
  ['2-2(M)', '#e8742c', 15, '15x11 16x5 15x6 14'],
  ['3-1(M)', '#c9fb4b', 15, '15x6 16x8 15x5 14x4'],
  ['4-1(H)', '#c9fb4b', 13, '13x8 14x9 15x6'],
  ['4-2(L)', '#c9fb4b', 13, '14x15 15x8'],
  ['1-3(M)', '#97c1fb', 15, '15x6 16x13 15x4'],
  ['2-3(H)', '#97c1fb', 14, '14x9 15x10 16x4'],
  ['1-4(L)', '#97c1fb', 16, '16x8 15x6 14x9'],
  ['3-3(L)', '#dcfde4', 14, '14x12 15x11'],
  ['3-4(H)', '#dcfde4', 13, '14x14 15x7 16x2'],
  ['4-4(M)', '#dcfde4', 15, '15x10 16x12 15']
];
// Note positions inside a four-bar clip: [x, width] on a 77-unit axis.
const notes = {
  13: [[3, 3], [13, 4], [19, 4], [34, 4], [40, 7], [53, 3], [59, 8], [72, 2]],
  14: [[3, 5], [15, 5], [22, 10], [36, 4], [43, 4], [52, 8], [63, 6]],
  15: [[2, 2], [9, 3], [16, 5], [24, 2], [30, 5], [38, 3], [47, 2], [53, 5], [62, 3], [69, 5]],
  16: [[3, 4], [12, 2], [19, 5], [28, 5], [38, 2], [43, 5], [54, 2], [59, 5], [68, 4]]
};
function noteSvg(n, seed) {
  const thin = notes[n].map((b, i) => i).filter(i => notes[n][i][1] < 6);
  const dark = thin[(seed * 3) % thin.length];
  const grid = [19, 38, 58].map(x => `<path d="M${x} 0v30" stroke="#d2d2d2" stroke-width="2"/>`).join('');
  const bars = notes[n].map(([x, w], i) => `<rect x="${x}" y="6" width="${w}" height="17" fill="${i === dark && seed % 3 === 1 ? '#111' : w > 6 ? '#a4a4a4' : '#707070'}"/>`).join('');
  return `<svg viewBox="0 0 77 30" preserveAspectRatio="none">${grid}${bars}</svg>`;
}
const down = '<svg viewBox="0 0 8 8"><circle cx="4" cy="4" r="3.500" fill="none" stroke="#111" stroke-width=".8"/><path d="M2 3h4L4 5.800z"/></svg>';
const right = '<svg viewBox="0 0 8 8"><circle cx="4" cy="4" r="3.500" fill="none" stroke="#111" stroke-width=".8"/><path d="M3 2v4l3-2z"/></svg>';
const arm = '<svg viewBox="0 0 6 6"><circle cx="3" cy="3" r="2.500"/><circle cx="3.800" cy="2.200" r=".9" fill="#bbb"/></svg>';

document.getElementById('tracks').innerHTML = tracks.map(([name, color, first, spec], t) => {
  const clips = rep(spec);
  return `<div class="track${t === 11 ? ' cur' : ''}"><div class="lane cols"><div class="clip"><b>... ${first}</b>${noteSvg(first, 0)}</div>` +
    clips.map((n, i) => `<div class="clip"><b>${n}</b>${noteSvg(n, i)}</div>`).join('') +
    `<div class="clip"><b>1</b></div></div>
    <div class="head" style="background:${color}">${down}${name}</div>
    <div class="io"><span class="sel-wrap"><select aria-label="${name} output"><option>Master</option></select></span><div class="empty"></div></div>
    <div class="mix"><button class="act">${t + 1}</button><button>S</button><button aria-label="Arm">${arm}</button><input class="vol" style="--v:55%" aria-label="Volume" value="-12.0"><input class="pan" aria-label="Pan" value="C"><span class="lvl"></span></div></div>`;
}).join('');

const barCells = Array.from({ length: 25 }, (_, i) => `<i${i > 1 && Math.floor((i - 2) / 4) % 2 === 0 ? ' class="lt"' : ''}></i>`).join('');
document.querySelectorAll('[data-bars]').forEach(el => { el.innerHTML = barCells; });
document.getElementById('ruler').innerHTML = '<i></i>' + Array.from({ length: 23 }, (_, i) => `<span>${557 + i * 4}</span>`).join('') + '<span></span>';

const strip = (name, color, io, mix) => `<div class="ret"><div class="cols bars">${barCells}</div><div class="head" style="background:${color}">${right}${name}</div><div class="io">${io}</div><div class="mix">${mix}<span class="lvl"></span></div></div>`;
const send = l => `<button class="act">${l}</button><button>S</button><button class="act">Post</button>`;
document.getElementById('returns').innerHTML =
  strip('A Reverb', '#57b9ac', '<div class="empty"></div>', send('A')) +
  strip('B Delay', '#76f9a8', '<div class="empty"></div>', send('B')) +
  strip('Master', '#8cfbe6', '<span class="sel-wrap"><select aria-label="Master output"><option>⫴ 1/2</option></select></span>',
    '<input class="vol" style="--v:85%" aria-label="Master volume" value="0"><input class="pan cue" aria-label="Cue volume" value="0">') +
  '<span class="ratio">1/1</span>';

document.querySelectorAll('.kn').forEach(el => {
  const [label, value, v, mode] = el.dataset.k.split('|');
  const pt = (f, r) => { const a = (135 + 270 * f) * Math.PI / 180; return `${(9 + r * Math.cos(a)).toFixed(2)} ${(9 + r * Math.sin(a)).toFixed(2)}`; };
  const arc = (a, b) => `M${pt(a, 7.5)}A7.5 7.5 0 ${(b - a) * 270 > 180 ? 1 : 0} 1 ${pt(b, 7.5)}`;
  const idle = mode > 1;
  el.innerHTML = `<span>${label}</span><svg viewBox="0 0 18 16"><path d="${arc(0, 1)}" fill="none" stroke="${idle ? '#666' : '#222'}" stroke-width="1.200"/><path d="${arc(0, Math.max(+v, .02))}" fill="none" stroke="${mode == 3 ? '#666' : mode == 2 ? '#ccc' : '#72d6f2'}" stroke-width="1.500"/><path d="M9 9L${pt(+v, 7)}" stroke="${idle ? '#666' : '#111'}" stroke-width="1.400"/></svg><span>${value}</span>`;
});
```
